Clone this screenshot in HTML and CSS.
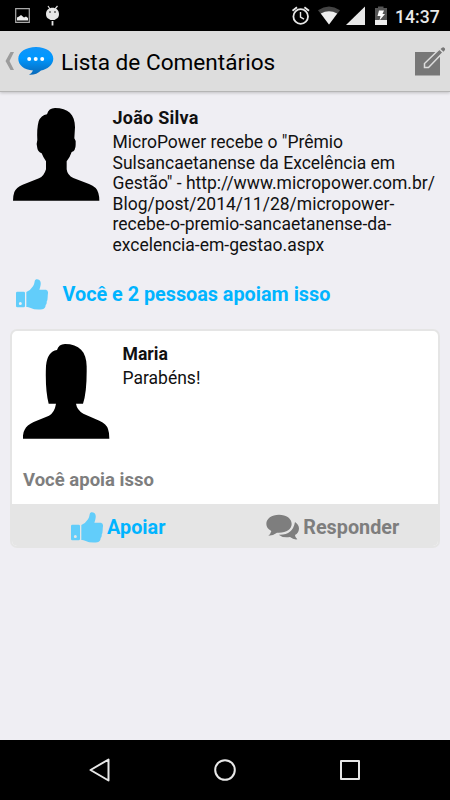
FILE: index.html
```html
<!DOCTYPE html>
<html lang="pt-BR">
<head>
	<meta charset="UTF-8">
	<meta name="viewport" content="width=device-width, initial-scale=1.0">
	<title>Lista de Comentários</title>
	<link rel="stylesheet" href="styles.css">
</head>
<body>
	<svg class="defs" width="0" height="0">
		<symbol id="like" viewBox="0 0 99 93">
			<path d="M4 38H23Q27 38 27 42V81Q27 85 23 85H4Q0 85 0 81V42Q0 38 4 38ZM13 69A4.500 4.500 0 1 0 13 78A4.500 4.500 0 1 0 13 69Z" fill-rule="evenodd"/>
			<path d="M31 39Q43 35 51 22C56 14 55 9 57 4C59-1 66 0 70 3C77 8 74 22 70 32H90Q97 34 96 43Q95 49 95 55Q95 63 92 68Q93 74 89 78Q89 88 79 91Q58 94 42 86Q36 83 31 84Z"/>
		</symbol>
	</svg>

	<!-- status bar -->
	<div class="status">
		<svg class="status-left" width="60" height="31" viewBox="0 0 60 31">
			<path d="M15.700 8.700H29.300V22.300H15.700Z" fill="none" stroke="#aaa" stroke-width="1.200"/>
			<path d="M17 20.500V17.500L19 16.500L21 15L24 17.500L26 16.500L28 18V20.500Z" fill="#eee"/>
			<path d="M48 6L50 9M57.500 6L55 9" stroke="#ddd" stroke-width="1.200"/>
			<path d="M46 14C46 5.500 59 5.500 59 14Q59 18 56 19L54.500 20H50.500L49 19Q46 18 46 14Z" fill="#e6e6e6"/>
			<path d="M52.500 21V25.500" stroke="#e6e6e6" stroke-width="1.800"/>
			<circle cx="50" cy="12" r=".8"/><circle cx="55" cy="12" r=".8"/>
		</svg>
		<svg class="status-right" width="100" height="31" viewBox="290 0 100 31">
			<g fill="none" stroke="#e8e8e8" stroke-width="1.800">
				<circle cx="300.700" cy="16.500" r="7.300"/>
				<path d="M292.500 10.800L297 7.200M304.400 7.200L309 10.800"/>
				<path d="M300.500 12V17L304 19.200" stroke-width="1.400"/>
			</g>
			<path d="M318 10.200Q329 3 340 10.200L329 24.500Z" fill="#444"/>
			<path d="M320.800 13.600Q329 9 337.200 13.600L329 24.500Z" fill="#eee"/>
			<path d="M365 6.500V25H346Z" fill="#e8e8e8"/>
			<path d="M375 8H378V6.500H383.500V8H387V20H375Z" fill="#555"/>
			<path d="M375 20H387V25H375Z" fill="#eee"/>
			<path d="M379 10.500H384L382.500 14H385L379.500 20.500L380.500 16H377.500Z" fill="#fff"/>
		</svg>
		<span class="clock">14:37</span>
	</div>

	<header class="topbar">
		<svg class="back" width="9" height="20" viewBox="0 0 9 20">
			<path d="M5.500 1H9L4.500 10L9 19H5.500L.5 10Z" fill="#9c9c9c"/>
		</svg>
		<svg class="logo" width="36" height="28" viewBox="0 0 36 28">
			<defs>
				<linearGradient id="blue" x1="0" y1="0" x2="0" y2="1">
					<stop offset="0" stop-color="#1195f8"/>
					<stop offset=".4" stop-color="#0098ff"/>
					<stop offset="1" stop-color="#0868b8"/>
				</linearGradient>
			</defs>
			<path d="M18 0C28 0 35.300 5 35.300 11.800C35.300 18 29 22.500 23 23.500C20 26.500 16 28 11 27.700Q14 26 15 23.500C6 23 .3 18 .3 11.800C.3 5 8 0 18 0Z" fill="url(#blue)"/>
			<g fill="#fff"><circle cx="11.200" cy="12" r="2"/><circle cx="17.700" cy="12" r="2"/><circle cx="24.200" cy="12" r="2"/></g>
		</svg>
		<h1 class="title">Lista de Comentários</h1>
		<svg class="edit" width="31" height="29" viewBox="0 0 31 29">
			<path d="M0 5H25V28.500H0Z" fill="#777"/>
			<path d="M9.500 20.500V16.500L24.500 2L28 5.500L13.500 20.500Z" fill="#777" stroke="#ddd" stroke-width="1.500"/>
			<path d="M25.500 2L27 .7Q28.500-.3 29.500 1Q30.700 2.200 29.500 3.500L28.500 4.800Z" fill="#777"/>
		</svg>
	</header>

	<main class="content">
		<section class="post">
			<svg class="avatar" width="87" height="93" viewBox="0 0 261 279">
				<path d="M126 0C165 0 186 19 186 58L184 91Q190 98 188 110Q188 128 176 132Q170 150 161 160V184Q163 202 181 210L228 228Q252 237 256 255Q259 265 259 278H0Q0 263 4 252Q9 239 29 230L78 211Q93 205 99 184V160Q91 149 86 136Q75 132 73 121Q69 107 73 96Q71 62 77 40Q84 22 102 19Q107 0 126 0Z"/>
			</svg>
			<div class="info">
				<h2 class="name">João Silva</h2>
				<p class="text">MicroPower recebe o "Prêmio<br>Sulsancaetanense da Excelência em<br>Gestão" - http://www.micropower.com.br/<br>Blog/post/2014/11/28/micropower-<br>recebe-o-premio-sancaetanense-da-<br>excelencia-em-gestao.aspx</p>
			</div>
		</section>

		<div class="likes">
			<svg class="like" width="33" height="31"><use href="#like"/></svg>
			<span>Você e 2 pessoas apoiam isso</span>
		</div>

		<article class="card">
			<div class="card-body">
				<svg class="avatar" width="87" height="95" viewBox="0 0 261 285">
					<path d="M126 0C169 0 192 24 191 70Q192 145 180 179H159Q162 198 181 209L229 230Q251 240 255 255Q259 265 259 284H0Q-1 266 5 257Q11 244 32 234L78 215Q95 205 99 179H77Q66 136 69 65Q73 23 102 18Q107 0 126 0Z"/>
				</svg>
				<div class="info">
					<h2 class="name">Maria</h2>
					<p class="text">Parabéns!</p>
				</div>
			</div>
			<p class="support">Você apoia isso</p>
			<div class="actions">
				<a class="action action-on">
					<svg class="like" width="33" height="31"><use href="#like"/></svg>
					<span>Apoiar</span>
				</a>
				<a class="action">
					<svg class="reply" width="33" height="27" viewBox="0 0 99 81">
						<path d="M87 24Q99 32 99 44Q98 57 87 63Q87 71 94 76Q83 78 72 69Q51 73 38 62Q80 64 87 24Z"/>
						<path d="M39 2C61 2 77 13 77 30C77 47 59 58 33 56Q22 65 7 65Q14 60 16 51Q1 43 1 30C1 13 17 2 39 2Z"/>
					</svg>
					<span>Responder</span>
				</a>
			</div>
		</article>
	</main>

	<!-- android navigation -->
	<nav class="navbar">
		<svg width="24" height="26" viewBox="0 0 24 26"><path d="M20.500 2.500V23.500L2.500 13Z"/></svg>
		<svg width="24" height="26" viewBox="0 0 24 26"><circle cx="12" cy="13" r="9.800"/></svg>
		<svg width="24" height="26" viewBox="0 0 24 26"><path d="M3 4H21V22H3Z"/></svg>
	</nav>
</body>
</html>
```

FILE: styles.css
```css
* {
	box-sizing: border-box;
	margin: 0;
	padding: 0;
}
body {
	display: flex;
	flex-direction: column;
	height: 800px;
	background: #efeef3;
	color: #111;
	font-family: Roboto, "Liberation Sans", sans-serif;
}
svg {
	display: block;
	flex: none;
}
.defs {
	display: none;
}
/* status bar */
.status {
	display: flex;
	align-items: center;
	height: 31px;
	background: #000;
}
.status-right {
	margin-left: auto;
}
.clock {
	width: 60px;
	padding: 2px 0 0 5px;
	color: #e8e8e8;
	font-size: 17.6px;
	font-weight: 500;
	line-height: 20px;
}
/* header */
.topbar {
	display: flex;
	align-items: center;
	height: 61px;
	padding: 0 4px 0 5px;
	background: #ddd;
	border-bottom: 1px solid #b5b5b5;
	box-shadow: 0 1px 3px rgba(0, 0, 0, .2);
}
.logo {
	margin-left: 4px;
}
.title {
	margin: 2px 0 0 7px;
	color: #000;
	font-size: 22.6px;
	font-weight: 400;
	white-space: nowrap;
}
.edit {
	margin-left: auto;
}
/* content */
.content {
	flex: 1;
	padding: 16px 10px 0;
}
.post {
	display: flex;
	gap: 12.5px;
	height: 162px;
	padding-left: 3px;
}
.info {
	white-space: nowrap;
}
.name {
	font-size: 18px;
	font-weight: 700;
	line-height: 20px;
}
.post .name {
	letter-spacing: .25px;
}
.text {
	padding-top: 4px;
	font-size: 17.5px;
	line-height: 20.6px;
}
.likes {
	display: flex;
	align-items: center;
	gap: 13.5px;
	height: 59px;
	padding: 0 0 10px 6px;
	color: #00b4ff;
	font-size: 19.8px;
	font-weight: 700;
}
.like {
	fill: #62cdfa;
}
/* comment card */
.card {
	height: 219px;
	border: 2px solid #e5e5e5;
	border-radius: 7px;
	background: #fff;
	overflow: hidden;
}
.card-body {
	display: flex;
	gap: 12.5px;
	height: 138px;
	padding: 13px 0 0 11px;
}
.card .name {
	font-size: 17.6px;
}
.support {
	height: 35px;
	padding-left: 11px;
	color: #7e7e7e;
	font-size: 18.5px;
	font-weight: 700;
	line-height: 22px;
}
.actions {
	display: flex;
	height: 44px;
	padding-top: 2px;
	background: #e5e5e5;
}
.action {
	display: flex;
	flex: 1;
	align-items: center;
	justify-content: center;
	gap: 4px;
	padding-left: 4px;
	color: #7e7e7e;
	font-size: 19.8px;
	font-weight: 700;
}
.action-on {
	gap: 3px;
	padding-left: 1px;
	color: #00b4ff;
}
.reply {
	fill: #7e7e7e;
}
/* navigation */
.navbar {
	display: flex;
	align-items: center;
	justify-content: center;
	gap: 101px;
	height: 60px;
	background: #000;
}
.navbar svg {
	fill: none;
	stroke: #e8e8e8;
	stroke-width: 2;
	stroke-linejoin: round;
}
```
